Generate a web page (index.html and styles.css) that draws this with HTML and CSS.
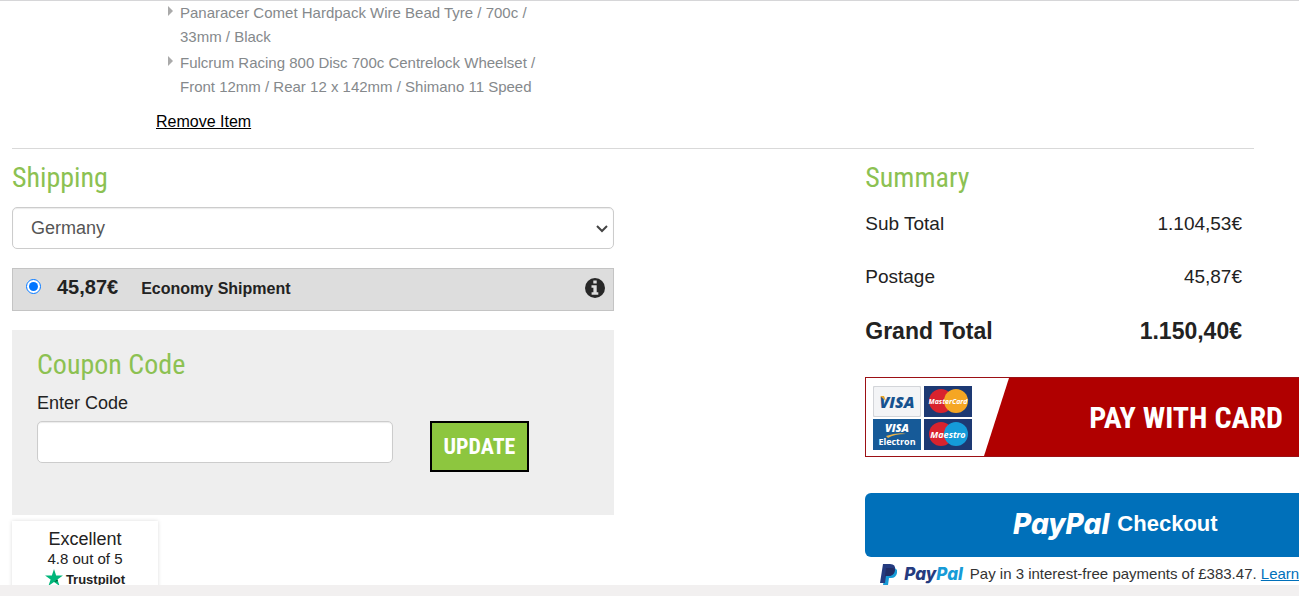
FILE: index.html
```html
<!DOCTYPE html>
<html lang="en">
<head>
<meta charset="utf-8">
<title>Basket</title>
<link rel="stylesheet" href="styles.css">
</head>
<body>
<main class="basket">
  <section class="item">
    <ul class="item-options">
      <li>Panaracer Comet Hardpack Wire Bead Tyre / 700c / 33mm / Black</li>
      <li>Fulcrum Racing 800 Disc 700c Centrelock Wheelset / Front 12mm / Rear 12 x 142mm / Shimano 11 Speed</li>
    </ul>
    <a class="remove" href="#">Remove Item</a>
  </section>

  <div class="columns">
    <div class="left">
      <section>
        <h2 class="heading"><label for="country">Shipping</label></h2>
        <div class="select-wrap">
          <select id="country" class="field country"><option>Germany</option></select>
          <svg class="chevron" viewBox="0 0 12 8" aria-hidden="true"><path d="M1 1l5 5 5-5" fill="none" stroke="#444" stroke-width="2"/></svg>
        </div>
        <div class="method">
          <input type="radio" id="economy" name="shipping" checked>
          <label for="economy"><span class="method-price">45,87€</span><span class="method-name">Economy Shipment</span></label>
          <button class="info" type="button" aria-label="Shipping information">
            <svg viewBox="0 0 20 20"><circle cx="10" cy="10" r="10" fill="#282828"/><path d="M8.3 2.5h3.4v3H8.3zM6.5 7.3h5.2v6.9h1.6v2.5H6.6v-2.5h1.8V9.7H6.5z" fill="#ddd"/></svg>
          </button>
        </div>
      </section>
      <form class="coupon">
        <h2 class="heading">Coupon Code</h2>
        <label class="coupon-label" for="code">Enter Code</label>
        <div class="coupon-row">
          <input id="code" class="field code" type="text">
          <button class="update" type="button">UPDATE</button>
        </div>
      </form>
      <aside class="trust">
        <div class="trust-title">Excellent</div>
        <div class="trust-score">4.8 out of 5</div>
        <div class="trust-brand">
          <svg viewBox="0 0 20 19" aria-hidden="true"><path d="M10 0l2.4 7.2H20l-6.2 4.4 2.4 7.3L10 14.4l-6.2 4.5 2.4-7.3L0 7.2h7.6z" fill="#00b67a"/><path d="M14.3 13.3l-.5-1.7L10 14.4z" fill="#005128"/></svg>
          <span>Trustpilot</span>
        </div>
      </aside>
    </div>

    <section class="summary">
      <h2 class="heading">Summary</h2>
      <dl class="totals">
        <div class="total"><dt>Sub Total</dt><dd>1.104,53€</dd></div>
        <div class="total"><dt>Postage</dt><dd>45,87€</dd></div>
        <div class="total grand"><dt>Grand Total</dt><dd>1.150,40€</dd></div>
      </dl>
      <button class="card-pay" type="button">
        <svg class="cards" viewBox="0 0 143 78" aria-hidden="true">
          <path d="M0 0h143l-25 78H0z" fill="#fff"/>
          <rect x="7" y="8" width="48" height="31" rx="1" fill="#d3d5d9"/>
          <rect x="8" y="9" width="46" height="29" rx="1" fill="#f3f4f6"/>
          <text class="visa" x="31" y="30" text-anchor="middle" fill="#16528f">VISA</text>
          <path d="M14 18h4l2 5z" fill="#e6a52d"/>
          <rect x="58" y="8" width="48" height="31" fill="#1d3973"/>
          <circle cx="75" cy="23" r="12" fill="#d9232e"/><circle cx="90" cy="23" r="12" fill="#f5a623"/>
          <text class="mark mark-long" x="82" y="26" text-anchor="middle" fill="#fff">MasterCard</text>
          <rect x="7" y="41" width="48" height="31" fill="#165a98"/>
          <text class="visa visa-small" x="31" y="54" text-anchor="middle" fill="#fff">VISA</text>
          <path d="M20 58q12-4 20-2q-12 0-18 4z" fill="#e9b34b"/>
          <text class="electron" x="31" y="67" text-anchor="middle" fill="#fff">Electron</text>
          <rect x="58" y="41" width="48" height="31" fill="#1d3973"/>
          <circle cx="75" cy="56" r="12" fill="#d9232e"/><circle cx="90" cy="56" r="12" fill="#159bd9"/>
          <text class="mark" x="82" y="60" text-anchor="middle" fill="#fff">Maestro</text>
        </svg>
        <span class="card-label">PAY WITH CARD</span>
      </button>
      <button class="paypal" type="button"><span class="paypal-word">PayPal</span><span>Checkout</span></button>
      <p class="instalments">
        <svg class="pp" viewBox="0 0 17 21" aria-hidden="true"><path d="M6 4h8q4 1 3 5-1 5-6 5H9l-1 7H3z" fill="#179bd7"/><path d="M3 0h7q6 0 5 6-1 6-7 6H6l-1 7H0z" fill="#253b80"/><path d="M6 4h6q3 0 3 2-1 6-7 6H5z" fill="#222d65"/></svg>
        <span class="pp-word"><span class="navy">Pay</span><span class="sky">Pal</span></span>
        <span>Pay in 3 interest-free payments of £383.47. <a href="#">Learn</a></span>
      </p>
    </section>
  </div>
</main>
<footer class="strip"></footer>
</body>
</html>
```
FILE: styles.css
```css
* { box-sizing: border-box; }
body {
  margin: 0;
  height: 100vh;
  display: flex;
  flex-direction: column;
  overflow: hidden;
  background: #fff;
  color: #222;
  font: 18px/24px "Liberation Sans", Arial, sans-serif;
}
.basket {
  flex: 1;
  min-height: 0;
  overflow: hidden;
  border-top: 1px solid #d6d6d8;
  padding: 0 45px 0 12px;
}
.strip { height: 11px; background: #f2f0f0; }
.item { padding: 0 0 14px 144px; border-bottom: 1px solid #d9d9d9; }
.item-options {
  width: 400px;
  margin: 0 0 11px;
  padding: 0 0 0 24px;
  list-style: none;
  color: #85898c;
  font-size: 15px;
}
.item-options li { position: relative; margin-bottom: 2px; }
.item-options li::before {
  content: "";
  position: absolute;
  left: -12px;
  top: 5px;
  border: 5px solid transparent;
  border-left-color: #aaa;
  border-right-width: 0;
}
.remove { display: block; width: max-content; color: #000; font-size: 16px; }
.columns { display: grid; grid-template-columns: 48.5% 31.3%; justify-content: space-between; }
.heading {
  margin: 0;
  color: #8cc152;
  font: 28px/40px "Saira Extra Condensed", "Roboto Condensed", "Liberation Sans Narrow", "Liberation Sans", sans-serif;
}
.left, .summary { padding-top: 9px; min-width: 0; }
.select-wrap { position: relative; margin-top: 9px; }
.field {
  display: block;
  height: 42px;
  border: 1px solid #ccc;
  border-radius: 5px;
  background: #fff;
  box-shadow: inset 0 1px 1px #ececec;
  color: #555;
  font: 18px "Liberation Sans", Arial, sans-serif;
}
.country { width: 100%; padding: 0 18px; appearance: none; }
.chevron { position: absolute; right: 6px; top: 18px; width: 12px; height: 8px; }
.method {
  display: flex;
  align-items: center;
  height: 43px;
  margin-top: 19px;
  padding: 0 8px 4px 13px;
  border: 1px solid #c4c4c4;
  background: #ddd;
  font-weight: bold;
}
.method input { width: 15px; height: 15px; margin: 0 16px 3px 0; accent-color: #0075ff; }
.method label { flex: 1; display: flex; align-items: baseline; gap: 23px; }
.method-price { font-size: 20px; }
.method-name { font-size: 16px; }
.info { padding: 0; border: 0; background: none; }
.info svg { display: block; width: 20px; height: 20px; }
.coupon { height: 185px; margin-top: 19px; padding: 15px 25px; background: #eee; }
.coupon-label { display: block; margin: 6px 0; }
.coupon-row { display: flex; gap: 37px; align-items: flex-start; }
.code { width: 356px; padding: 0 12px; }
.update {
  width: 99px;
  height: 51px;
  padding: 0;
  border: 2px solid #000;
  background: #8dc63f;
  color: #fff;
  font: bold 22px "Saira Extra Condensed", "Roboto Condensed", "Liberation Sans Narrow", "Liberation Sans", sans-serif;
}
.trust {
  width: 146px;
  margin-top: 6px;
  padding: 6px 0;
  box-shadow: 0 0 4px #ddd;
  text-align: center;
}
.trust-score { font-size: 15px; line-height: 16px; }
.trust-brand { display: flex; justify-content: center; gap: 3px; font: bold 13px/22px "Liberation Sans", Arial, sans-serif; }
.trust-brand svg { width: 18px; height: 17px; margin-top: 2px; }
.trust-brand span { padding-top: 2px; }
.totals { margin: 14px 0 0; padding-right: 12px; }
.total { display: flex; justify-content: space-between; height: 53px; font-size: 19px; }
.total dd { margin: 0; }
.total.grand { height: 59px; font-size: 23px; font-weight: bold; line-height: 26px; }
.card-pay {
  display: flex;
  align-items: center;
  width: 500px;
  height: 80px;
  padding: 0;
  border: 1px solid #9c1015;
  background: #b00000;
  color: #fff;
}
.cards { width: 143px; height: 78px; flex: none; }
.visa { font: italic 900 16px "Open Sans", sans-serif; }
.visa.visa-small { font-size: 11px; }
.mark { font: italic bold 9px "Open Sans", sans-serif; }
.mark.mark-long { font-size: 7px; }
.electron { font: bold 9px "Open Sans", sans-serif; }
.card-label {
  margin-left: 80px;
  font: bold 30px "Saira Extra Condensed", "Roboto Condensed", "Liberation Sans Narrow", "Liberation Sans", sans-serif;
}
.paypal {
  display: flex;
  justify-content: center;
  align-items: center;
  gap: 8px;
  width: 500px;
  height: 64px;
  margin-top: 36px;
  padding-bottom: 4px;
  border: 0;
  border-radius: 6px;
  background: #0070ba;
  color: #fff;
  font: bold 22px "Liberation Sans", Arial, sans-serif;
}
.paypal-word { font: italic 800 28px Inter, sans-serif; }
.instalments {
  display: flex;
  align-items: center;
  gap: 7px;
  margin: 5px 0 0 15px;
  color: #333;
  font-size: 15px;
  white-space: nowrap;
}
.pp { width: 17px; height: 21px; flex: none; }
.pp-word { font: italic 800 17px/24px Inter, sans-serif; }
.navy { color: #253b80; }
.sky { color: #179bd7; }
.instalments a { color: #0070ba; }
```
